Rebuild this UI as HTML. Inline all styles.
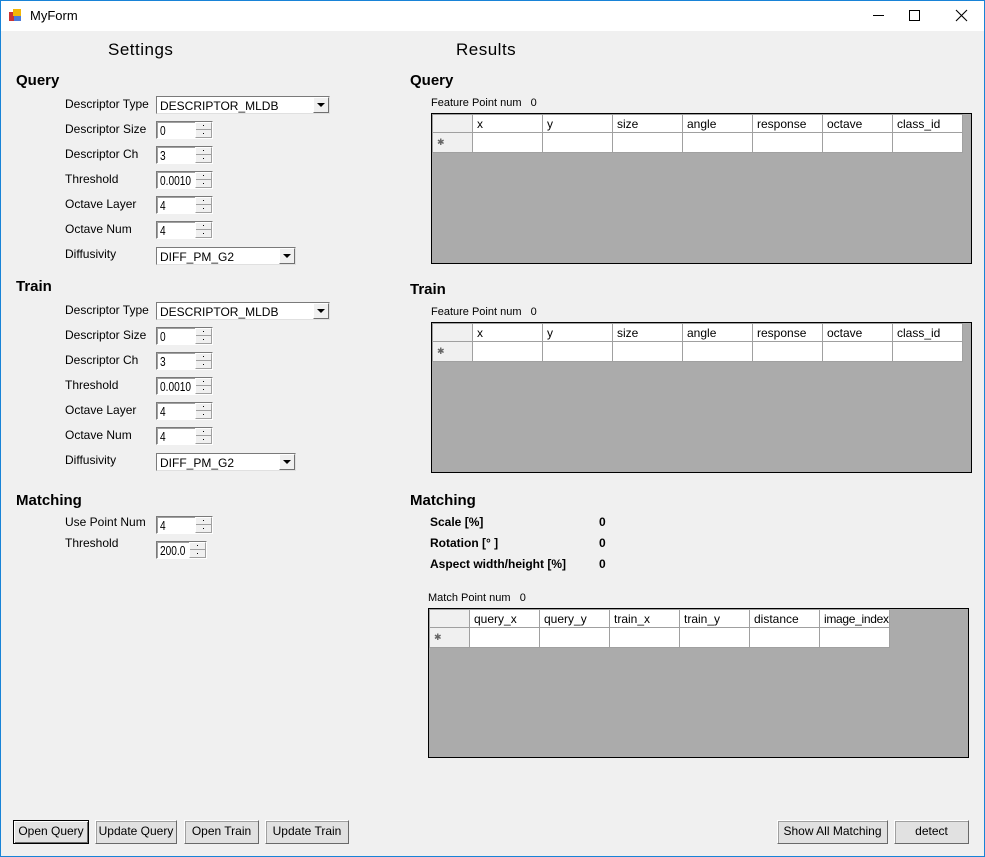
<!DOCTYPE html>
<html><head><meta charset="utf-8"><style>
*{margin:0;padding:0;box-sizing:border-box}
body{width:985px;height:857px;background:#f0f0f0;position:relative;overflow:hidden;font-family:"Liberation Sans","Noto Sans CJK JP",sans-serif;font-size:12px;color:#000}
.a{position:absolute;white-space:nowrap}
.win{position:absolute;left:0;top:0;width:985px;height:857px;border:1px solid #1883d7;border-top:none}
.title{position:absolute;left:0;top:0;width:985px;height:31px;background:#fff;border:1px solid #1883d7;border-bottom:none}
.h1{font-size:17px;letter-spacing:0.5px}
.h2{font-size:15px;font-weight:bold}
.lbl{font-size:12px}
.spin{position:absolute;height:18px;background:#fff;border:1px solid #7a7a7a;border-right-color:#fff;border-bottom-color:#fff;box-shadow:inset 1px 1px 0 #a0a0a0;font-size:13px;line-height:14px;padding:2px 0 0 3px;overflow:hidden}
.spin .t{display:inline-block;transform:scaleX(0.78);transform-origin:left}
.spin .b{position:absolute;right:0;top:0;width:17px;height:16px;background:#f0f0f0;border:1px solid #a0a0a0;border-top-color:#fff;border-left-color:#fff}
.spin .b:before{content:"";position:absolute;left:0;right:0;top:6px;border-top:1px solid #a0a0a0}
.spin .b:after{content:"";position:absolute;left:7px;top:2px;width:1px;height:1px;background:#000;box-shadow:0 8px 0 #000}
.combo{position:absolute;height:18px;background:#fff;border:1px solid #7a7a7a;border-right-color:#e0e0e0;border-bottom-color:#e0e0e0;font-size:12px;padding:2px 0 0 3px}
.combo .b{position:absolute;right:0;top:0;width:16px;height:16px;background:#f0f0f0;border:1px solid #fff;border-right-color:#707070;border-bottom-color:#707070}
.combo .b:after{content:"";position:absolute;left:3px;top:5px;border-left:4px solid transparent;border-right:4px solid transparent;border-top:4px solid #000}
.grid{position:absolute;background:#ababab;border:1px solid #000}
table{border-collapse:collapse;position:absolute;left:0;top:0;font-size:12px}
td{height:18px;width:70px;max-width:70px;overflow:hidden;white-space:nowrap;border:1px solid #a0a0a0;padding:0 0 0 4px;background:#fff;color:#000}
tr.r td{height:20px}
td.rh{width:40px;background:#f0f0f0}
.btn{position:absolute;height:24px;background:#e1e1e1;border:1px solid #fff;border-right-color:#696969;border-bottom-color:#696969;box-shadow:1px 1px 0 #a0a0a0 inset;font-size:12px;text-align:center;line-height:21px}
</style></head><body>
<div class="title"></div>
<div class="win"></div>
<svg class="a" style="left:9px;top:9px" width="14" height="13"><rect x="0" y="3" width="5" height="9" fill="#c33"/><rect x="4" y="0" width="8" height="7" fill="#f2b705"/><rect x="5" y="7" width="7" height="5" fill="#4a7ad8"/></svg>
<div class="a" style="left:30px;top:8px;font-size:13px">MyForm</div>
<div class="a" style="left:873px;top:15px;width:11px;border-top:1px solid #000"></div>
<div class="a" style="left:909px;top:10px;width:11px;height:11px;border:1px solid #000"></div>
<svg class="a" style="left:955px;top:9px" width="13" height="13"><path d="M1 1L12 12M12 1L1 12" stroke="#000" stroke-width="1.1"/></svg>

<div class="a h1" style="left:108px;top:40px">Settings</div>
<div class="a h1" style="left:456px;top:40px">Results</div>

<div class="a h2" style="left:16px;top:72px">Query</div>
<div class="a lbl" style="left:65px;top:97px">Descriptor Type</div>
<div class="combo" style="left:156px;top:96px;width:174px">DESCRIPTOR_MLDB<div class="b"></div></div>
<div class="a lbl" style="left:65px;top:122px">Descriptor Size</div>
<div class="spin" style="left:156px;top:121px;width:57px"><span class="t">0</span><div class="b"></div></div>
<div class="a lbl" style="left:65px;top:147px">Descriptor Ch</div>
<div class="spin" style="left:156px;top:146px;width:57px"><span class="t">3</span><div class="b"></div></div>
<div class="a lbl" style="left:65px;top:172px">Threshold</div>
<div class="spin" style="left:156px;top:171px;width:57px"><span class="t">0.0010</span><div class="b"></div></div>
<div class="a lbl" style="left:65px;top:197px">Octave Layer</div>
<div class="spin" style="left:156px;top:196px;width:57px"><span class="t">4</span><div class="b"></div></div>
<div class="a lbl" style="left:65px;top:222px">Octave Num</div>
<div class="spin" style="left:156px;top:221px;width:57px"><span class="t">4</span><div class="b"></div></div>
<div class="a lbl" style="left:65px;top:247px">Diffusivity</div>
<div class="combo" style="left:156px;top:247px;width:140px">DIFF_PM_G2<div class="b"></div></div>

<div class="a h2" style="left:16px;top:278px">Train</div>
<div class="a lbl" style="left:65px;top:303px">Descriptor Type</div>
<div class="combo" style="left:156px;top:302px;width:174px">DESCRIPTOR_MLDB<div class="b"></div></div>
<div class="a lbl" style="left:65px;top:328px">Descriptor Size</div>
<div class="spin" style="left:156px;top:327px;width:57px"><span class="t">0</span><div class="b"></div></div>
<div class="a lbl" style="left:65px;top:353px">Descriptor Ch</div>
<div class="spin" style="left:156px;top:352px;width:57px"><span class="t">3</span><div class="b"></div></div>
<div class="a lbl" style="left:65px;top:378px">Threshold</div>
<div class="spin" style="left:156px;top:377px;width:57px"><span class="t">0.0010</span><div class="b"></div></div>
<div class="a lbl" style="left:65px;top:403px">Octave Layer</div>
<div class="spin" style="left:156px;top:402px;width:57px"><span class="t">4</span><div class="b"></div></div>
<div class="a lbl" style="left:65px;top:428px">Octave Num</div>
<div class="spin" style="left:156px;top:427px;width:57px"><span class="t">4</span><div class="b"></div></div>
<div class="a lbl" style="left:65px;top:453px">Diffusivity</div>
<div class="combo" style="left:156px;top:453px;width:140px">DIFF_PM_G2<div class="b"></div></div>

<div class="a h2" style="left:16px;top:492px">Matching</div>
<div class="a lbl" style="left:65px;top:515px">Use Point Num</div>
<div class="spin" style="left:156px;top:516px;width:57px"><span class="t">4</span><div class="b"></div></div>
<div class="a lbl" style="left:65px;top:536px">Threshold</div>
<div class="spin" style="left:156px;top:541px;width:51px"><span class="t">200.0</span><div class="b"></div></div>

<div class="a h2" style="left:410px;top:72px">Query</div>
<div class="a" style="left:431px;top:97px;font-size:11px">Feature Point num &nbsp;&nbsp;0</div>
<div class="grid" style="left:431px;top:113px;width:541px;height:151px">
<table><tr class="h"><td class="rh"></td><td>x</td><td>y</td><td>size</td><td>angle</td><td>response</td><td>octave</td><td>class_id</td></tr>
<tr class="r"><td class="rh" style="color:#666;font-size:9px">✱</td><td></td><td></td><td></td><td></td><td></td><td></td><td></td></tr></table></div>

<div class="a h2" style="left:410px;top:281px">Train</div>
<div class="a" style="left:431px;top:306px;font-size:11px">Feature Point num &nbsp;&nbsp;0</div>
<div class="grid" style="left:431px;top:322px;width:541px;height:151px">
<table><tr class="h"><td class="rh"></td><td>x</td><td>y</td><td>size</td><td>angle</td><td>response</td><td>octave</td><td>class_id</td></tr>
<tr class="r"><td class="rh" style="color:#666;font-size:9px">✱</td><td></td><td></td><td></td><td></td><td></td><td></td><td></td></tr></table></div>

<div class="a h2" style="left:410px;top:492px">Matching</div>
<div class="a" style="left:430px;top:515px;font-weight:bold;font-size:12px">Scale [%]</div>
<div class="a" style="left:599px;top:515px;font-weight:bold">0</div>
<div class="a" style="left:430px;top:536px;font-weight:bold;font-size:12px">Rotation [°&nbsp;]</div>
<div class="a" style="left:599px;top:536px;font-weight:bold">0</div>
<div class="a" style="left:430px;top:557px;font-weight:bold;font-size:12px">Aspect width/height [%]</div>
<div class="a" style="left:599px;top:557px;font-weight:bold">0</div>

<div class="a" style="left:428px;top:592px;font-size:11px">Match Point num &nbsp;&nbsp;0</div>
<div class="grid" style="left:428px;top:608px;width:541px;height:150px">
<table><tr class="h"><td class="rh"></td><td>query_x</td><td>query_y</td><td>train_x</td><td>train_y</td><td>distance</td><td style="letter-spacing:-0.3px">image_index</td></tr>
<tr class="r"><td class="rh" style="color:#666;font-size:9px">✱</td><td></td><td></td><td></td><td></td><td></td><td></td></tr></table></div>

<div class="btn" style="left:13px;top:820px;width:76px;border:1px solid #000;box-shadow:inset 1px 1px 0 #fff,inset -1px -1px 0 #696969">Open Query</div>
<div class="btn" style="left:95px;top:820px;width:82px">Update Query</div>
<div class="btn" style="left:184px;top:820px;width:75px">Open Train</div>
<div class="btn" style="left:265px;top:820px;width:84px">Update Train</div>
<div class="btn" style="left:777px;top:820px;width:111px">Show All Matching</div>
<div class="btn" style="left:894px;top:820px;width:75px">detect</div>
</body></html>
